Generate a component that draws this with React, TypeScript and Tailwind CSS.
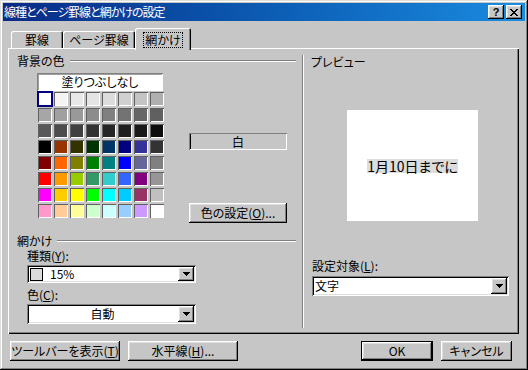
import React from "react";

// classic 3d edges, drawn with inset shadows so they take no layout space
const raised =
  "shadow-[inset_-1px_-1px_0_#000,inset_1px_1px_0_#fff,inset_-2px_-2px_0_#808080,inset_2px_2px_0_#dfdfdf]";
const sunken =
  "shadow-[inset_1px_1px_0_#808080,inset_-1px_-1px_0_#fff,inset_2px_2px_0_#000,inset_-2px_-2px_0_#dfdfdf]";

const SWATCHES = [
  "bg-[#ffffff]", "bg-[#f4f4f4]", "bg-[#e8e8e8]", "bg-[#e4e4e4]", "bg-[#dcdcdc]", "bg-[#d0d0d0]", "bg-[#c4c4c4]", "bg-[#b0b0b0]",
  "bg-[#a6a6a6]", "bg-[#a0a0a0]", "bg-[#999999]", "bg-[#8c8c8c]", "bg-[#808080]", "bg-[#737373]", "bg-[#666666]", "bg-[#606060]",
  "bg-[#595959]", "bg-[#4d4d4d]", "bg-[#404040]", "bg-[#333333]", "bg-[#262626]", "bg-[#202020]", "bg-[#1a1a1a]", "bg-[#0d0d0d]",
  "bg-[#000000]", "bg-[#993300]", "bg-[#333300]", "bg-[#003300]", "bg-[#003366]", "bg-[#000080]", "bg-[#333399]", "bg-[#333333]",
  "bg-[#800000]", "bg-[#ff6600]", "bg-[#808000]", "bg-[#008000]", "bg-[#008080]", "bg-[#0000ff]", "bg-[#666699]", "bg-[#808080]",
  "bg-[#ff0000]", "bg-[#ff9900]", "bg-[#99cc00]", "bg-[#339966]", "bg-[#33cccc]", "bg-[#3366ff]", "bg-[#800080]", "bg-[#969696]",
  "bg-[#ff00ff]", "bg-[#ffcc00]", "bg-[#ffff00]", "bg-[#00ff00]", "bg-[#00ffff]", "bg-[#00ccff]", "bg-[#993366]", "bg-[#c0c0c0]",
  "bg-[#ff99cc]", "bg-[#ffcc99]", "bg-[#ffff99]", "bg-[#ccffcc]", "bg-[#ccffff]", "bg-[#99ccff]", "bg-[#cc99ff]", "bg-[#ffffff]",
];

function U({ c }: { c: string }) {
  return <span className="underline underline-offset-[1px]">{c}</span>;
}

function Arrow() {
  return (
    <div className={`w-[16px] self-stretch my-[2px] mr-[2px] bg-[#c6c6c6] flex items-center justify-center ${raised}`}>
      <svg width="7" height="4" viewBox="0 0 7 4" shapeRendering="crispEdges">
        <path d="M0 0h7v1H0zM1 1h5v1H1zM2 2h3v1H2zM3 3h1v1H3z" fill="#000" />
      </svg>
    </div>
  );
}

function Etched() {
  return <div className="flex-1 ml-[5px] h-0 border-t border-t-[#808080] border-b border-b-white" />;
}

export default function App() {
  return (
    <div
      className={`w-[528px] h-[370px] bg-[#c6c6c6] p-[3px] flex flex-col text-black text-[12px] leading-none font-['Noto_Sans_CJK_JP','Noto_Sans_CJK_SC',sans-serif] [font-feature-settings:'palt'] shadow-[inset_-1px_-1px_0_#000,inset_1px_1px_0_#dfdfdf,inset_-2px_-2px_0_#808080,inset_2px_2px_0_#fff]`}
    >
      {/* title bar */}
      <div className="h-[18px] flex items-center bg-linear-to-r from-[#0a2a86] to-[#1a8ce0] pl-[1px] pr-[3px]">
        <span className="flex-1 text-white text-[12px] leading-none tracking-[-1px]">線種とページ罫線と網かけの設定</span>
        <div className={`w-[16px] h-[14px] bg-[#c6c6c6] flex items-center justify-center ${raised}`}>
          <span className="font-['Liberation_Sans',sans-serif] font-bold text-[11px] leading-none">?</span>
        </div>
        <div className={`ml-[2px] w-[16px] h-[14px] bg-[#c6c6c6] flex items-center justify-center ${raised}`}>
          <svg width="8" height="7" viewBox="0 0 8 7" shapeRendering="crispEdges">
            <path
              d="M0 0h2v1H0zM6 0h2v1H6zM1 1h2v1H1zM5 1h2v1H5zM2 2h4v1H2zM3 3h2v1H3zM2 4h4v1H2zM1 5h2v1H1zM5 5h2v1H5zM0 6h2v1H0zM6 6h2v1H6z"
              fill="#000"
            />
          </svg>
        </div>
      </div>

      {/* tabs + panel */}
      <div className="ml-[5px] mt-[7px] w-[511px]">
        <div className="flex items-end h-[20px] pl-[3px]">
          <div className="w-[52px] h-[17px] flex items-center justify-center rounded-t-[2px] shadow-[inset_1px_1px_0_#fff,inset_-1px_0_0_#000,inset_-2px_0_0_#808080]">
            罫線
          </div>
          <div className="w-[72px] h-[17px] flex items-center justify-center rounded-t-[2px] shadow-[inset_1px_1px_0_#fff,inset_-1px_0_0_#000,inset_-2px_0_0_#808080]">
            ページ罫線
          </div>
          <div className="relative z-10 -mb-[2px] w-[56px] h-[22px] bg-[#c6c6c6] flex items-start justify-center pt-[4px] rounded-t-[2px] shadow-[inset_1px_1px_0_#fff,inset_-1px_0_0_#000,inset_-2px_0_0_#808080]">
            <span className="border border-dotted border-black px-[1px] py-[1px] leading-none">網かけ</span>
          </div>
        </div>

        <div className="h-[286px] flex shadow-[inset_1px_1px_0_#fff,inset_-1px_-1px_0_#000,inset_-2px_-2px_0_#808080]">
          {/* left column */}
          <div className="w-[294px] flex flex-col">
            <div className="flex items-center mt-[7px] ml-[9px] mr-[6px] h-[12px]">
              <span>背景の色</span>
              <Etched />
            </div>

            <div className="flex mt-[6px] ml-[29px]">
              <div className="flex flex-col">
                <div className="w-[126px] h-[18px] bg-white flex items-center justify-center shadow-[inset_1px_1px_0_#808080,inset_-1px_-1px_0_#fff,inset_2px_2px_0_#a0a0a0]">
                  塗りつぶしなし
                </div>
                <div className="grid grid-cols-8 w-[128px]">
                  {SWATCHES.map((c, i) =>
                    i === 0 ? (
                      <div key={i} className="w-[16px] h-[16px] border-2 border-[#000080] bg-white" />
                    ) : (
                      <div key={i} className="w-[16px] h-[16px] p-[1px]">
                        <div className={`w-full h-full ${c} shadow-[inset_1px_1px_0_#606060,inset_-1px_-1px_0_#fff]`} />
                      </div>
                    )
                  )}
                </div>
              </div>
              <div className="ml-[24px] w-[98px] flex flex-col">
                <div className="mt-[60px] h-[17px] flex items-center justify-center shadow-[inset_1px_1px_0_#808080,inset_-1px_-1px_0_#fff,inset_2px_0_0_#000]">
                  白
                </div>
                <div className={`mt-[53px] h-[20px] flex items-center justify-center ${raised}`}>
                  色の設定(<U c="O" />)...
                </div>
              </div>
            </div>

            <div className="flex items-center mt-[12px] ml-[9px] mr-[6px] h-[12px]">
              <span>網かけ</span>
              <Etched />
            </div>
            <div className="ml-[19px] mt-[3px] h-[12px]">
              種類(<U c="Y" />):
            </div>
            <div className={`ml-[19px] mt-[3px] w-[169px] h-[18px] bg-white flex items-stretch ${sunken}`}>
              <div className="flex-1 flex items-center pl-[3px]">
                <div className="w-[13px] h-[13px] border border-black bg-[#dcdcdc]" />
                <span className="ml-[7px]">15%</span>
              </div>
              <Arrow />
            </div>
            <div className="ml-[19px] mt-[6px] h-[12px]">
              色(<U c="C" />):
            </div>
            <div className={`ml-[19px] mt-[3px] w-[169px] h-[20px] bg-white flex items-stretch ${sunken}`}>
              <div className="flex-1 flex items-center justify-center">自動</div>
              <Arrow />
            </div>
          </div>

          {/* separator */}
          <div className="mt-[7px] h-[273px] w-0 border-l border-l-[#808080] border-r border-r-white" />

          {/* right column */}
          <div className="flex-1 flex flex-col">
            <div className="ml-[7px] mt-[8px] h-[12px]">プレビュー</div>
            <div className="ml-[43px] mt-[42px] w-[131px] h-[111px] bg-white flex items-center justify-center">
              <span className="bg-[#dddddd] text-[14px] leading-[14px]">1月10日までに</span>
            </div>
            <div className="ml-[8px] mt-[39px] h-[12px]">
              設定対象(<U c="L" />):
            </div>
            <div className={`ml-[8px] mt-[4px] w-[197px] h-[20px] bg-white flex items-stretch ${sunken}`}>
              <div className="flex-1 flex items-center pl-[3px]">文字</div>
              <Arrow />
            </div>
          </div>
        </div>
      </div>

      {/* bottom buttons */}
      <div className="flex mt-[7px] pl-[7px] pr-[13px]">
        <div className={`w-[110px] h-[20px] flex items-center justify-center ${raised}`}>
          ツールバーを表示(<U c="T" />)
        </div>
        <div className={`ml-[8px] w-[110px] h-[20px] flex items-center justify-center ${raised}`}>
          水平線(<U c="H" />)...
        </div>
        <div className="ml-auto w-[72px] h-[20px] border border-black">
          <div className={`w-full h-full flex items-center justify-center ${raised}`}>OK</div>
        </div>
        <div className={`ml-[8px] w-[71px] h-[20px] flex items-center justify-center ${raised}`}>
          キャンセル
        </div>
      </div>
    </div>
  );
}
